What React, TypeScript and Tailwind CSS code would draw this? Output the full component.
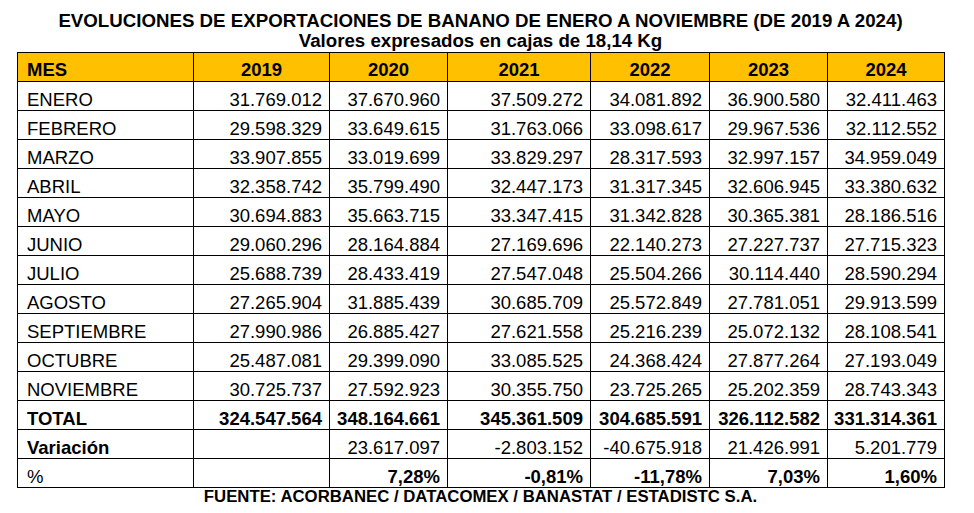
const years = ["2019", "2020", "2021", "2022", "2023", "2024"];

const months: [string, string[]][] = [
  ["ENERO", ["31.769.012", "37.670.960", "37.509.272", "34.081.892", "36.900.580", "32.411.463"]],
  ["FEBRERO", ["29.598.329", "33.649.615", "31.763.066", "33.098.617", "29.967.536", "32.112.552"]],
  ["MARZO", ["33.907.855", "33.019.699", "33.829.297", "28.317.593", "32.997.157", "34.959.049"]],
  ["ABRIL", ["32.358.742", "35.799.490", "32.447.173", "31.317.345", "32.606.945", "33.380.632"]],
  ["MAYO", ["30.694.883", "35.663.715", "33.347.415", "31.342.828", "30.365.381", "28.186.516"]],
  ["JUNIO", ["29.060.296", "28.164.884", "27.169.696", "22.140.273", "27.227.737", "27.715.323"]],
  ["JULIO", ["25.688.739", "28.433.419", "27.547.048", "25.504.266", "30.114.440", "28.590.294"]],
  ["AGOSTO", ["27.265.904", "31.885.439", "30.685.709", "25.572.849", "27.781.051", "29.913.599"]],
  ["SEPTIEMBRE", ["27.990.986", "26.885.427", "27.621.558", "25.216.239", "25.072.132", "28.108.541"]],
  ["OCTUBRE", ["25.487.081", "29.399.090", "33.085.525", "24.368.424", "27.877.264", "27.193.049"]],
  ["NOVIEMBRE", ["30.725.737", "27.592.923", "30.355.750", "23.725.265", "25.202.359", "28.743.343"]],
];

const totals = ["324.547.564", "348.164.661", "345.361.509", "304.685.591", "326.112.582", "331.314.361"];
const variacion = ["", "23.617.097", "-2.803.152", "-40.675.918", "21.426.991", "5.201.779"];
const percent = ["", "7,28%", "-0,81%", "-11,78%", "7,03%", "1,60%"];

const widths = [176, 136, 118, 143, 119, 118, 117];

const App = () => {
  return (
    <div className="w-[974px] h-[513px] bg-white text-black font-['Liberation_Sans',Arial,sans-serif] pl-[17px]">
      {/* title */}
      <div className="w-[927px] pt-[11px] mb-[2px] text-center font-bold text-[18.7px] leading-[19.5px]">
        <div>EVOLUCIONES DE EXPORTACIONES DE BANANO DE ENERO A NOVIEMBRE (DE 2019 A 2024)</div>
        <div>Valores expresados en cajas de 18,14 Kg</div>
      </div>

      <table className="w-[927px] table-fixed border-collapse text-[18.5px] leading-[20px]">
        <colgroup>
          {widths.map((w, i) => (
            <col key={i} style={{ width: w }} />
          ))}
        </colgroup>
        <thead>
          <tr className="h-[29px] bg-[#ffc000] font-bold">
            <th className="border border-black text-left align-bottom pl-[9px] pb-[1px]">MES</th>
            {years.map((y) => (
              <th key={y} className="border border-black text-center align-bottom pb-[1px]">
                {y}
              </th>
            ))}
          </tr>
        </thead>
        <tbody>
          {months.map(([name, vals]) => (
            <tr key={name} className="h-[29px]">
              <td className="border border-black align-bottom pl-[9px]">{name}</td>
              {vals.map((v, i) => (
                <td key={i} className="border border-black align-bottom text-right pr-[7px]">
                  {v}
                </td>
              ))}
            </tr>
          ))}
          <tr className="h-[29px] font-bold">
            <td className="border border-black align-bottom pl-[9px]">TOTAL</td>
            {totals.map((v, i) => (
              <td key={i} className="border border-black align-bottom text-right pr-[7px]">
                {v}
              </td>
            ))}
          </tr>
          <tr className="h-[29px]">
            <td className="border border-black align-bottom pl-[9px] font-bold">Variación</td>
            {variacion.map((v, i) => (
              <td key={i} className="border border-black align-bottom text-right pr-[7px]">
                {v}
              </td>
            ))}
          </tr>
          <tr className="h-[29px]">
            <td className="border border-black align-bottom pl-[9px]">%</td>
            {percent.map((v, i) => (
              <td key={i} className="border border-black align-bottom text-right pr-[7px] font-bold">
                {v}
              </td>
            ))}
          </tr>
        </tbody>
      </table>

      <div className="w-[927px] text-center font-bold text-[16.75px] leading-[18px]">
        FUENTE: ACORBANEC / DATACOMEX / BANASTAT / ESTADISTC S.A.
      </div>
    </div>
  );
};

export default App;
